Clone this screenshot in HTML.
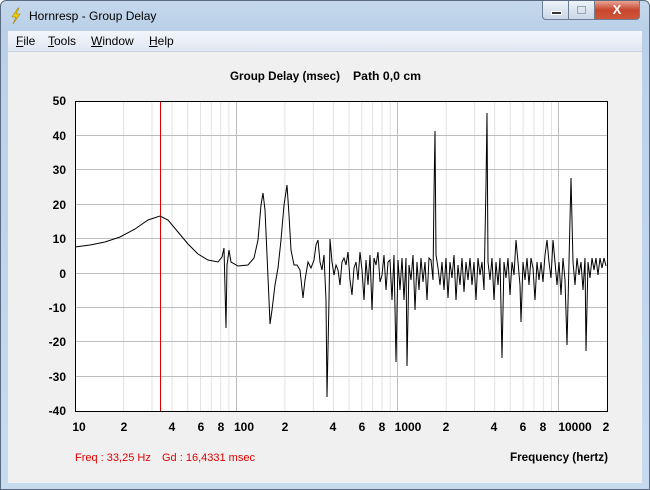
<!DOCTYPE html>
<html><head><style>
body{margin:0;width:650px;height:490px;overflow:hidden;background:#fff;font-family:"Liberation Sans",sans-serif}
.win{position:absolute;left:0;top:0;width:648px;height:488px;border:1px solid #5a6a80;border-radius:6px 6px 0 0;background:linear-gradient(#c5d8ec,#b9d0e8 30px,#c7dbef);}
.title{position:absolute;left:28px;top:8px;font-size:12px;color:#000}
.menu{position:absolute;left:7px;top:30px;width:634px;height:20px;background:linear-gradient(#f4f7fb,#dfe7f2);font-size:12px}
.menu span{position:absolute;top:3px}
.client{position:absolute;left:7px;top:50px;width:634px;height:431px;background:#f0f0f0;border-top:1px solid #c8d2de}
.btn{position:absolute;top:0;height:18px;border:1px solid #6d7d92;border-top:none}
</style></head><body>
<div class="win">
<svg style="position:absolute;left:8px;top:6px" width="14" height="18"><path d="M9 1 L3 10 L7 10 L4 17 L11 7 L7 7 L10 1Z" fill="#f5d000" stroke="#a08000" stroke-width="0.6"/></svg>
<div class="title">Hornresp - Group Delay</div>
<div class="btn" style="left:541px;width:25px;border-radius:0 0 0 4px;background:linear-gradient(#eef3f9,#c9d7e7)"><div style="position:absolute;left:8px;top:10px;width:9px;height:2px;background:#333;border:1px solid #fff"></div></div>
<div class="btn" style="left:567px;width:25px;background:linear-gradient(#eef3f9,#c9d7e7)"><div style="position:absolute;left:8px;top:5px;width:7px;height:6px;border:1px solid #9aa;"></div></div>
<div class="btn" style="left:593px;width:44px;border-radius:0 0 4px 0;background:linear-gradient(#e9a394,#c8472e 50%,#d0543a)"><div style="position:absolute;left:0;width:44px;top:1px;text-align:center;color:#fff;font-weight:bold;font-size:13px">X</div></div>
<div class="menu">
<span style="left:8px"><u>F</u>ile</span><span style="left:40px"><u>T</u>ools</span><span style="left:83px"><u>W</u>indow</span><span style="left:141px"><u>H</u>elp</span>
</div>
<div class="client"></div>
</div>
<svg style="position:absolute;left:0;top:0" width="650" height="490" font-family="Liberation Sans, sans-serif">
<text x="230" y="80" font-size="12" font-weight="bold" textLength="110" lengthAdjust="spacingAndGlyphs">Group Delay (msec)</text>
<text x="353" y="80" font-size="12" font-weight="bold" textLength="68" lengthAdjust="spacingAndGlyphs">Path 0,0 cm</text>
<rect x="75" y="101" width="532" height="310" fill="#fff"/>
<g stroke="#e2e2e2" stroke-width="1">
<path d="M123.6 101V411M152 101V411M172.1 101V411M187.7 101V411M200.5 101V411M211.3 101V411M220.7 101V411M228.9 101V411M284.9 101V411M313.3 101V411M333.4 101V411M349 101V411M361.8 101V411M372.6 101V411M382 101V411M390.2 101V411M446.2 101V411M474.6 101V411M494.7 101V411M510.3 101V411M523.1 101V411M533.9 101V411M543.3 101V411M551.5 101V411"/>
</g>
<g stroke="#bdbdbd" stroke-width="1">
<path d="M236.5 101V411M397.5 101V411M558.5 101V411"/>
<path d="M75 135.5H607M75 169.5H607M75 204.5H607M75 238.5H607M75 273.5H607M75 307.5H607M75 341.5H607M75 376.5H607"/>
</g>
<line x1="160.5" y1="101" x2="160.5" y2="411" stroke="#e00000"/>
<polyline fill="none" stroke="#000" stroke-width="1" points="75,247 90,245 105,242 120,237 135,229 148,220 160,216 168,220 178,232 188,244 198,254 208,260 218,262 222,257 224,248 226,328 227,265 229,250 231,262 238,266 248,265 254,258 258,240 261,205 263,193 265,210 267,255 269,300 270,324 272,310 275,285 278,268 281,240 284,205 287,185 289,215 291,250 294,265 297,265 300,270 303,298 305,280 308,262 311,268 314,260 316,245 318,240 320,262 322,270 324,255 326,300 327,397 329,300 330,239 332,262 334,275 336,265 338,270 340,285 342,262 344,258 346,265 348,252 350,280 352,295 354,268 356,262 358,280 360,252 362,270 364,300 366,260 368,285 370,255 372,310 374,258 376,265 378,252 380,282 382,275 384,255 386,290 388,262 390,260 392,300 394,255 396,362 398,260 400,290 402,258 404,300 406,258 407,366 409,265 411,280 413,255 415,310 417,262 419,290 421,258 423,282 425,262 427,300 429,258 431,260 433,280 434,193 435,131 436,255 438,268 440,285 442,262 444,290 446,258 448,298 450,262 452,278 454,255 456,300 458,265 460,285 462,258 464,292 466,262 468,280 470,258 472,285 474,262 476,300 478,258 480,275 482,262 484,290 486,185 487,113 488,262 490,280 492,258 494,300 496,262 498,285 500,258 502,358 504,262 506,278 508,258 510,295 512,262 514,275 516,240 518,262 520,285 521,322 523,262 525,280 527,258 529,285 531,258 533,268 535,300 537,262 539,280 541,262 543,282 545,255 547,240 549,262 551,278 553,240 555,262 557,285 559,262 561,295 563,258 565,280 567,345 569,262 571,178 573,262 575,285 577,258 579,275 581,262 583,290 585,258 586,351 588,262 590,278 592,258 594,270 596,258 598,275 600,258 602,268 604,258 606,266"/>
<rect x="75.5" y="101.5" width="532" height="310" fill="none" stroke="#000"/>
<g font-size="12" font-weight="bold" text-anchor="end">
<text x="66" y="105">50</text><text x="66" y="140">40</text><text x="66" y="174">30</text><text x="66" y="209">20</text><text x="66" y="243">10</text><text x="66" y="278">0</text><text x="66" y="312">-10</text><text x="66" y="346">-20</text><text x="66" y="381">-30</text><text x="66" y="415">-40</text>
</g>
<g font-size="12" font-weight="bold" text-anchor="middle">
<text x="79" y="431">10</text><text x="124" y="431">2</text><text x="172" y="431">4</text><text x="201" y="431">6</text><text x="221" y="431">8</text><text x="244" y="431">100</text><text x="285" y="431">2</text><text x="333" y="431">4</text><text x="362" y="431">6</text><text x="382" y="431">8</text><text x="408" y="431">1000</text><text x="446" y="431">2</text><text x="494" y="431">4</text><text x="523" y="431">6</text><text x="543" y="431">8</text><text x="575" y="431">10000</text><text x="606" y="431">2</text>
</g>
<text x="75" y="461" font-size="11" fill="#e00000">Freq : 33,25 Hz</text>
<text x="162" y="461" font-size="11" fill="#e00000">Gd : 16,4331 msec</text>
<text x="608" y="461" font-size="12" font-weight="bold" text-anchor="end" textLength="98" lengthAdjust="spacingAndGlyphs">Frequency (hertz)</text>
</svg>
</body></html>
